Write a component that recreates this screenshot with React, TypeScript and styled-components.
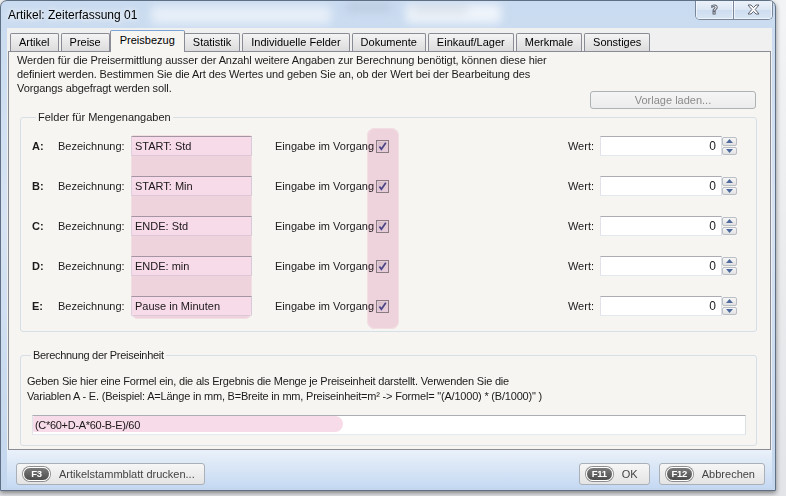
import styled, { createGlobalStyle } from "styled-components";

const GlobalStyle = createGlobalStyle`
  html, body {
    margin: 0;
    padding: 0;
  }

  body {
    width: 786px;
    height: 496px;
    overflow: hidden;
    background: linear-gradient(180deg, #f3f4f5 0%, #e2e4e7 100%);
    font-family: "Liberation Sans", Arial, sans-serif;
    font-size: 11px;
    color: #1b1b1b;
  }
`;

const Window = styled.div`
  position: relative;
  width: 776px;
  height: 491px;
  box-sizing: border-box;
  border: 1px solid #5f6f84;
  border-radius: 7px 7px 0 0;
  background: linear-gradient(180deg, #c9dbf0 0%, #d6e3f3 45%, #c3d6ed 100%);
  box-shadow: 0 2px 5px rgba(0, 0, 0, 0.45);
  display: flex;
  flex-direction: column;
  overflow: hidden;
`;

const TitleBar = styled.div`
  position: relative;
  flex: none;
  height: 27px;
  display: flex;
  align-items: center;
  padding-left: 7px;
`;

/* blurred desktop showing through the glass caption */
const Glass = styled.div<{ $left: number; $top: number; $w: number; $h: number; $tone: string }>`
  position: absolute;
  left: ${(p) => p.$left}px;
  top: ${(p) => p.$top}px;
  width: ${(p) => p.$w}px;
  height: ${(p) => p.$h}px;
  background: ${(p) => p.$tone};
  border-radius: 4px;
  filter: blur(5px);
`;

const Caption = styled.span`
  position: relative;
  font-size: 12px;
  color: #000;
  text-shadow: 0 0 6px #fff, 0 0 10px #fff;
`;

const CaptionButtons = styled.div`
  position: absolute;
  top: -1px;
  right: 2px;
  height: 19px;
  display: flex;
  border: 1px solid #7a879a;
  border-top: none;
  border-radius: 0 0 5px 5px;
  overflow: hidden;
`;

const CaptionButton = styled.div<{ $w: number }>`
  width: ${(p) => p.$w}px;
  display: flex;
  align-items: center;
  justify-content: center;
  background: linear-gradient(180deg, #edf3fa 0%, #dce7f4 50%, #cddcef 51%, #d8e5f4 100%);
  box-shadow: inset 0 0 0 1px rgba(255, 255, 255, 0.6);

  & + & {
    border-left: 1px solid #7a879a;
  }
`;

const HelpGlyph = styled.span`
  font-family: "DejaVu Sans", sans-serif;
  font-weight: bold;
  font-size: 12px;
  color: #fff;
  -webkit-text-stroke: 1px #5d6470;
`;

const Client = styled.div`
  flex: 1;
  margin: 0 3px 2px 6px;
  background: #f0f0f0;
  display: flex;
  flex-direction: column;
`;

const TabStrip = styled.div`
  flex: none;
  height: 23px;
  display: flex;
  align-items: flex-end;
  padding-left: 3px;
`;

const Tab = styled.div<{ $active?: boolean }>`
  position: relative;
  box-sizing: border-box;
  height: ${(p) => (p.$active ? 22 : 18)}px;
  padding: 0 ${(p) => (p.$active ? 9 : 8)}px;
  margin: 0 ${(p) => (p.$active ? -1 : 2)}px ${(p) => (p.$active ? -1 : 0)}px
    ${(p) => (p.$active ? -2 : 0)}px;
  border: 1px solid #898c95;
  border-top-color: ${(p) => (p.$active ? "#79a6d6" : "#898c95")};
  border-bottom: none;
  border-radius: 2px 2px 0 0;
  line-height: ${(p) => (p.$active ? 19 : 17)}px;
  white-space: nowrap;
  color: #000;
  background: ${(p) =>
    p.$active
      ? "#f6f5f2"
      : "linear-gradient(180deg, #f4f4f4 0%, #e9e9e9 45%, #dcdcdc 100%)"};
  z-index: ${(p) => (p.$active ? 1 : 0)};
`;

const Panel = styled.div`
  flex: 1;
  margin: 0 1px;
  border: 1px solid #898c95;
  background: #f6f5f2;
  padding: 1px 13px 3px 8px;
  display: flex;
  flex-direction: column;
`;

const Intro = styled.p`
  margin: 0;
  line-height: 14px;
  letter-spacing: -0.1px;
`;

const ToolRow = styled.div`
  display: flex;
  justify-content: flex-end;
  margin-top: -4px;
  padding-right: 1px;
`;

const GhostButton = styled.div`
  width: 166px;
  height: 18px;
  box-sizing: border-box;
  border: 1px solid #adb2b5;
  border-radius: 3px;
  background: linear-gradient(180deg, #f5f5f5 0%, #ececec 100%);
  color: #8a8a8a;
  line-height: 16px;
  text-align: center;
`;

const Group = styled.fieldset`
  min-width: 0;
  margin: 0 0 0 3px;
  border: 1px solid #d5dfe5;
  border-radius: 3px;
`;

const Legend = styled.legend<{ $narrow?: boolean }>`
  padding: 0 2px;
  margin-left: 4px;
  line-height: 15px;
  letter-spacing: ${(p) => (p.$narrow ? -0.3 : 0)}px;
`;

const FieldsGroup = styled(Group)`
  margin-top: 1px;
  padding: 11px 19px 15px 11px;
`;

const FieldGrid = styled.div`
  display: grid;
  grid-template-columns: 26px 73px 121px 124px 13px 1fr 137px;
  grid-template-rows: repeat(5, 20px);
  row-gap: 20px;
`;

const FieldRow = styled.div<{ $row: number }>`
  grid-column: 1 / -1;
  grid-row: ${(p) => p.$row};
  display: grid;
  grid-template-columns: subgrid;
  align-items: center;
`;

const Letter = styled.span`
  font-weight: bold;
`;

const InlineLabel = styled.span<{ $indent?: number; $align?: "left" | "right" }>`
  padding-left: ${(p) => p.$indent ?? 0}px;
  padding-right: 6px;
  text-align: ${(p) => p.$align ?? "left"};
  white-space: nowrap;
  overflow: hidden;
`;

const TextBox = styled.div`
  height: 20px;
  box-sizing: border-box;
  border: 1px solid;
  border-color: #abadb3 #dbdfe6 #e3e9ef #e2e3ea;
  background: #fff;
  padding: 0 3px;
  line-height: 18px;
  white-space: nowrap;
  overflow: hidden;
`;

/* translucent marker strokes laid over the form */
const Marker = styled.div<{ $col: number; $margin: string; $radius: string }>`
  grid-column: ${(p) => p.$col};
  grid-row: 1 / -1;
  align-self: stretch;
  margin: ${(p) => p.$margin};
  border-radius: ${(p) => p.$radius};
  background: #f7dbe8;
  mix-blend-mode: multiply;
  box-shadow: inset 0 0 0 1px #fbe9f1;
  pointer-events: none;
  z-index: 2;
`;

const CheckBox = styled.span`
  width: 13px;
  height: 13px;
  box-sizing: border-box;
  border: 1px solid #8e8f8f;
  background: linear-gradient(135deg, #d9d9d9 0%, #f4f4f4 100%);
  box-shadow: inset 0 0 0 1px #eeeeee;
  display: flex;
  align-items: center;
  justify-content: center;
`;

const Spin = styled.div`
  display: flex;
  height: 20px;
`;

const SpinField = styled(TextBox)`
  flex: 1;
  text-align: right;
  padding-right: 5px;
  font-size: 12px;
`;

const SpinButtons = styled.div`
  width: 15px;
  display: flex;
  flex-direction: column;
  gap: 1px;
  padding: 1px 0;
  box-sizing: border-box;
`;

const SpinButton = styled.div`
  flex: 1;
  border: 1px solid #b9bdc4;
  border-radius: 2px;
  background: linear-gradient(180deg, #f7f7f7 0%, #e1e1e1 100%);
  display: flex;
  align-items: center;
  justify-content: center;
`;

const FormulaGroup = styled(Group)`
  margin-top: 16px;
  padding: 11px 10px 10px 6px;
`;

const Hint = styled.p`
  margin: 0;
  line-height: 15px;
  letter-spacing: -0.2px;
`;

const FormulaBox = styled(TextBox)`
  position: relative;
  margin: 11px 0 0 5px;
  padding-left: 2px;
  letter-spacing: -0.3px;
`;

const FormulaMark = styled.span`
  position: absolute;
  left: 0;
  top: 0;
  bottom: 2px;
  width: 310px;
  border-radius: 2px 9px 9px 2px;
  background: #f7dbe8;
  mix-blend-mode: multiply;
  pointer-events: none;
`;

const Footer = styled.div`
  flex: none;
  height: 38px;
  box-sizing: border-box;
  padding: 13px 7px 0 9px;
  display: flex;
  align-items: flex-start;
  gap: 9px;
  background: linear-gradient(180deg, #eaf1f9 0%, #d8e5f6 50%, #c5d9f3 100%);
`;

const Spacer = styled.div`
  flex: 1;
`;

const FooterButton = styled.div<{ $minWidth?: number }>`
  height: 22px;
  min-width: ${(p) => p.$minWidth ?? 0}px;
  box-sizing: border-box;
  display: flex;
  align-items: center;
  gap: 9px;
  padding: 0 9px 0 6px;
  border: 1px solid #a9b0b8;
  border-radius: 3px;
  background: linear-gradient(180deg, #f6f6f6 0%, #ededed 50%, #e4e4e4 100%);
  color: #444;
`;

const KeyBadge = styled.span`
  width: 27px;
  height: 14px;
  box-sizing: border-box;
  border-radius: 8px;
  border: 1px solid #fff;
  box-shadow: 0 0 0 1px #8e8e8e;
  background: linear-gradient(180deg, #7a7a7a 0%, #4d4d4d 100%);
  color: #fff;
  font-size: 9.5px;
  font-weight: bold;
  line-height: 12px;
  text-align: center;
  letter-spacing: -0.3px;
`;

const tabs = [
  "Artikel",
  "Preise",
  "Preisbezug",
  "Statistik",
  "Individuelle Felder",
  "Dokumente",
  "Einkauf/Lager",
  "Merkmale",
  "Sonstiges",
];

const fields = [
  { key: "A", name: "START: Std" },
  { key: "B", name: "START: Min" },
  { key: "C", name: "ENDE: Std" },
  { key: "D", name: "ENDE: min" },
  { key: "E", name: "Pause in Minuten" },
];

const Check = () => (
  <svg width="9" height="9" viewBox="0 0 9 9">
    <path d="M1.4 4.6 L3.4 7.3 L7.8 0.8" stroke="#4b4f93" strokeWidth="1.7" fill="none" />
  </svg>
);

const Arrow = ({ up }: { up?: boolean }) => (
  <svg width="7" height="4" viewBox="0 0 7 4">
    <path d={up ? "M0 4 L3.5 0 L7 4 Z" : "M0 0 L3.5 4 L7 0 Z"} fill="#4f6a9d" />
  </svg>
);

const CloseGlyph = () => (
  <svg width="13" height="11" viewBox="0 0 13 11">
    <path
      d="M1 1 H4 L6.5 3.6 L9 1 H12 L8.2 5.5 L12 10 H9 L6.5 7.4 L4 10 H1 L4.8 5.5 Z"
      fill="#fff"
      stroke="#5d6470"
      strokeWidth="1"
      strokeLinejoin="round"
    />
  </svg>
);

export default function App() {
  return (
    <>
      <GlobalStyle />
      <Window>
        <TitleBar>
          <Glass $left={150} $top={5} $w={180} $h={18} $tone="rgba(255,255,255,0.55)" />
          <Glass $left={345} $top={3} $w={45} $h={6} $tone="rgba(120,130,150,0.25)" />
          <Glass $left={405} $top={3} $w={95} $h={19} $tone="rgba(255,255,255,0.7)" />
          <Glass $left={412} $top={6} $w={55} $h={5} $tone="rgba(120,130,150,0.25)" />
          <Caption>Artikel: Zeiterfassung 01</Caption>
          <CaptionButtons>
            <CaptionButton $w={37}>
              <HelpGlyph>?</HelpGlyph>
            </CaptionButton>
            <CaptionButton $w={38}>
              <CloseGlyph />
            </CaptionButton>
          </CaptionButtons>
        </TitleBar>

        <Client>
          <TabStrip>
            {tabs.map((t) => (
              <Tab key={t} $active={t === "Preisbezug"}>
                {t}
              </Tab>
            ))}
          </TabStrip>

          <Panel>
            <Intro>
              Werden für die Preisermittlung ausser der Anzahl weitere Angaben zur Berechnung benötigt, können diese hier
              <br />
              definiert werden. Bestimmen Sie die Art des Wertes und geben Sie an, ob der Wert bei der Bearbeitung des
              <br />
              Vorgangs abgefragt werden soll.
            </Intro>
            <ToolRow>
              <GhostButton>Vorlage laden...</GhostButton>
            </ToolRow>

            <FieldsGroup>
              <Legend>Felder für Mengenangaben</Legend>
              <FieldGrid>
                {fields.map((f, i) => (
                  <FieldRow key={f.key} $row={i + 1}>
                    <Letter>{f.key}:</Letter>
                    <span>Bezeichnung:</span>
                    <TextBox>{f.name}</TextBox>
                    <InlineLabel $indent={23}>Eingabe im Vorgang</InlineLabel>
                    <CheckBox>
                      <Check />
                    </CheckBox>
                    <InlineLabel $align="right">Wert:</InlineLabel>
                    <Spin>
                      <SpinField>0</SpinField>
                      <SpinButtons>
                        <SpinButton>
                          <Arrow up />
                        </SpinButton>
                        <SpinButton>
                          <Arrow />
                        </SpinButton>
                      </SpinButtons>
                    </Spin>
                  </FieldRow>
                ))}
                <Marker $col={3} $margin="-1px 0 -3px 0" $radius="4px 4px 7px 7px" />
                <Marker $col={5} $margin="-8px -10px -13px -9px" $radius="8px" />
              </FieldGrid>
            </FieldsGroup>

            <FormulaGroup>
              <Legend $narrow>Berechnung der Preiseinheit</Legend>
              <Hint>
                Geben Sie hier eine Formel ein, die als Ergebnis die Menge je Preiseinheit darstellt. Verwenden Sie die
                <br />
                Variablen A - E. (Beispiel: A=Länge in mm, B=Breite in mm, Preiseinheit=m² -&gt; Formel= "(A/1000) *
                (B/1000)" )
              </Hint>
              <FormulaBox>
                <FormulaMark />
                (C*60+D-A*60-B-E)/60
              </FormulaBox>
            </FormulaGroup>
          </Panel>

          <Footer>
            <FooterButton>
              <KeyBadge>F3</KeyBadge>
              Artikelstammblatt drucken...
            </FooterButton>
            <Spacer />
            <FooterButton $minWidth={71}>
              <KeyBadge>F11</KeyBadge>
              OK
            </FooterButton>
            <FooterButton>
              <KeyBadge>F12</KeyBadge>
              Abbrechen
            </FooterButton>
          </Footer>
        </Client>
      </Window>
    </>
  );
}
